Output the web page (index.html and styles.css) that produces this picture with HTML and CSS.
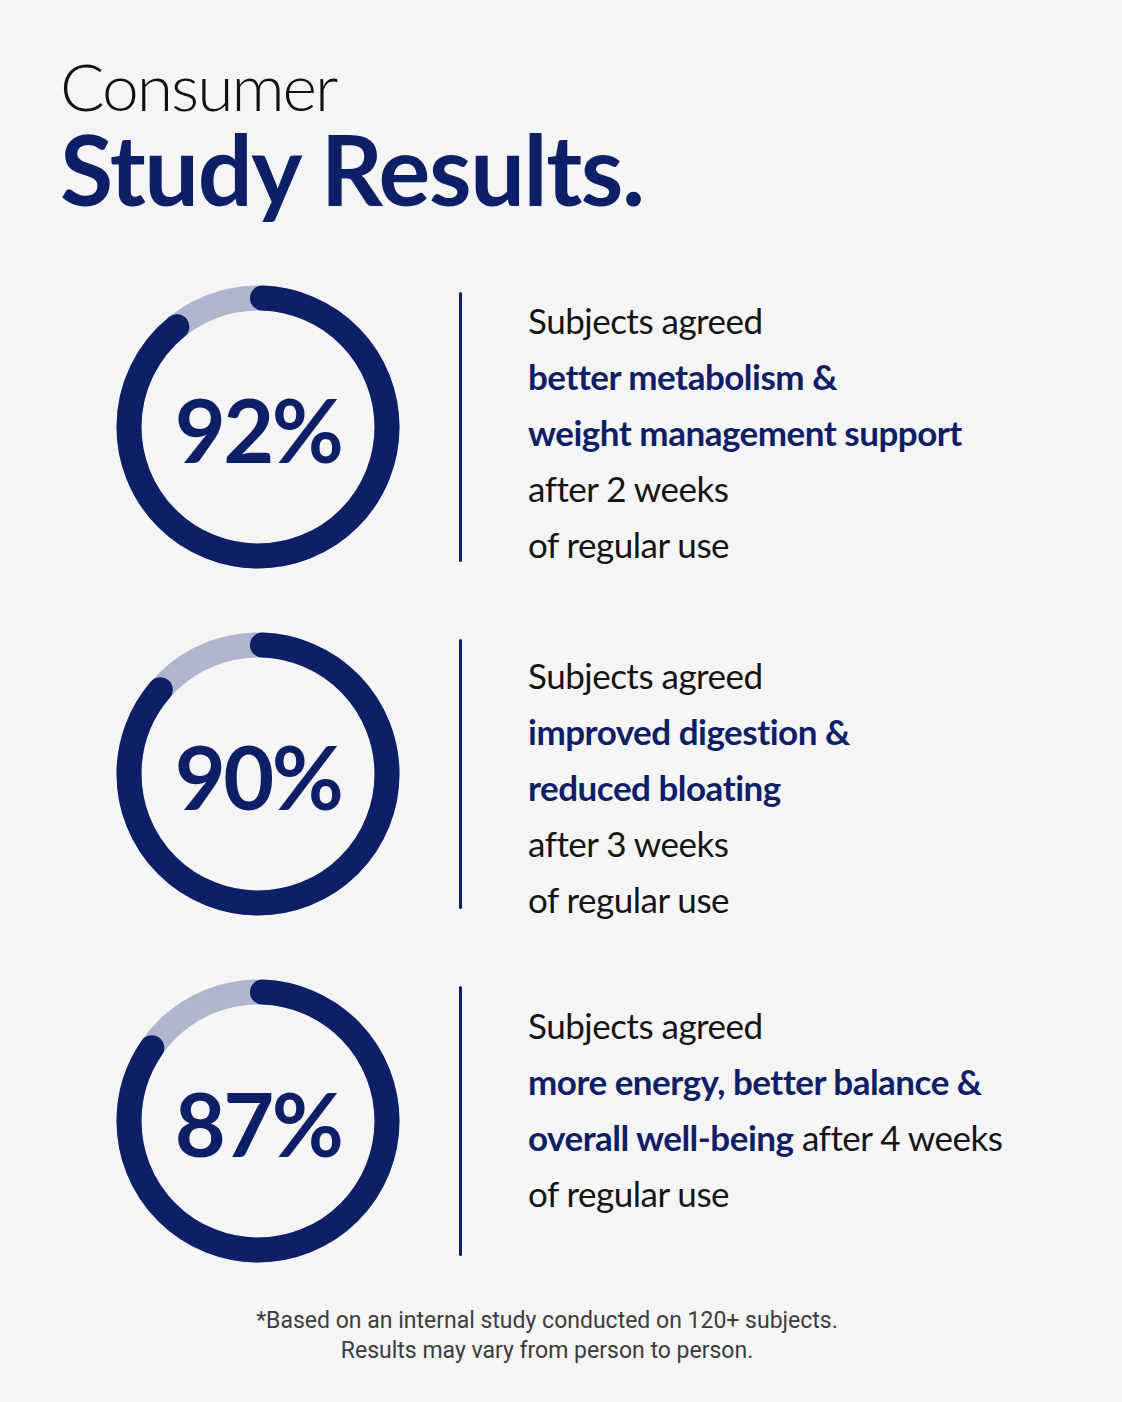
FILE: index.html
```html
<!DOCTYPE html>
<html lang="en">
<head>
<meta charset="utf-8">
<title>Consumer Study Results</title>
<link rel="stylesheet" href="styles.css">
</head>
<body>
<main class="page">
  <header class="title">
    <div class="title-light">Consumer</div>
    <h1 class="title-bold">Study Results.</h1>
  </header>

  <section class="results">
    <div class="row row--a">
      <div class="ring">
        <svg class="ring-svg" viewBox="0 0 290 290" aria-hidden="true">
          <circle class="ring-track" cx="145" cy="145" r="129"/>
          <circle class="ring-bar" cx="145" cy="145" r="129" style="stroke-dasharray: 718 900"/>
        </svg>
        <div class="ring-value">92%</div>
      </div>
      <div class="divider"></div>
      <p class="copy">
        <span class="line">Subjects agreed</span>
        <strong class="line hl">better metabolism &amp;</strong>
        <strong class="line hl">weight management support</strong>
        <span class="line">after 2 weeks</span>
        <span class="line">of regular use</span>
      </p>
    </div>

    <div class="row row--b">
      <div class="ring">
        <svg class="ring-svg" viewBox="0 0 290 290" aria-hidden="true">
          <circle class="ring-track" cx="145" cy="145" r="129"/>
          <circle class="ring-bar" cx="145" cy="145" r="129" style="stroke-dasharray: 695 900"/>
        </svg>
        <div class="ring-value">90%</div>
      </div>
      <div class="divider"></div>
      <p class="copy">
        <span class="line">Subjects agreed</span>
        <strong class="line hl">improved digestion &amp;</strong>
        <strong class="line hl">reduced bloating</strong>
        <span class="line">after 3 weeks</span>
        <span class="line">of regular use</span>
      </p>
    </div>

    <div class="row row--c">
      <div class="ring">
        <svg class="ring-svg" viewBox="0 0 290 290" aria-hidden="true">
          <circle class="ring-track" cx="145" cy="145" r="129"/>
          <circle class="ring-bar" cx="145" cy="145" r="129" style="stroke-dasharray: 681 900"/>
        </svg>
        <div class="ring-value">87%</div>
      </div>
      <div class="divider"></div>
      <p class="copy">
        <span class="line">Subjects agreed</span>
        <strong class="line hl">more energy, better balance &amp;</strong>
        <span class="line"><strong class="hl">overall well-being</strong> after 4 weeks</span>
        <span class="line">of regular use</span>
      </p>
    </div>
  </section>

  <footer class="note">
    <p>*Based on an internal study conducted on 120+ subjects.</p>
    <p>Results may vary from person to person.</p>
  </footer>
</main>
</body>
</html>
```

FILE: styles.css
```css
* { box-sizing: border-box; }

html, body {
  margin: 0;
  padding: 0;
  background: #f6f5f5;
}

body {
  font-family: "Lato", "Noto Sans", sans-serif;
  font-variant-ligatures: none;
  color: #111;
}

.page {
  width: 1122px;
  height: 1402px;
  padding: 53px 0 0 60px;
  display: flex;
  flex-direction: column;
}

.title-light {
  font-weight: 300;
  font-size: 66px;
  line-height: 66px;
  letter-spacing: -2px;
  color: #111;
}

.title-bold {
  margin: 0;
  font-weight: 700;
  font-size: 97px;
  line-height: 100px;
  letter-spacing: -1.4px;
  color: #0d1f66;
}

.results {
  margin-top: 63px;
  display: flex;
  flex-direction: column;
  gap: 57px;
}

.row {
  display: flex;
  align-items: flex-start;
  height: 290px;
}

.ring {
  margin-left: 53px;
  width: 290px;
  height: 290px;
  display: grid;
  place-items: center;
}

.ring-svg,
.ring-value {
  grid-area: 1 / 1;
}

.ring-svg {
  width: 290px;
  height: 290px;
  display: block;
}

.ring-track {
  fill: none;
  stroke: #b1b6cf;
  stroke-width: 25;
}

.ring-bar {
  fill: none;
  stroke: #0d1f66;
  stroke-width: 25;
  stroke-linecap: round;
  stroke-dashoffset: -4.5;
  transform: rotate(-90deg);
  transform-origin: 145px 145px;
}

.ring-value {
  font-weight: 700;
  font-size: 88px;
  line-height: 1;
  letter-spacing: -2.5px;
  color: #0d1f66;
  padding-top: 4px;
}

.divider {
  width: 3px;
  height: 270px;
  margin: 10px 0 0 56px;
  background: #0d1f66;
  border-radius: 2px;
}

.copy {
  margin: 0 0 0 66px;
  padding-top: 10px;
  display: flex;
  flex-direction: column;
  font-size: 35px;
  line-height: 56px;
  font-weight: 400;
  letter-spacing: -0.5px;
  color: #141414;
}

.row--b .copy { padding-top: 18px; }
.row--c .copy { padding-top: 21px; }

.line { display: block; white-space: nowrap; }

.hl {
  font-weight: 700;
  letter-spacing: -0.5px;
  color: #0d1f66;
}

.note {
  margin-top: 40px;
  padding-right: 88px;
  text-align: center;
  font-family: "Roboto", "Liberation Sans", sans-serif;
  font-size: 23px;
  line-height: 30px;
  color: #3c3c3c;
}

.note p { margin: 0; }
```
